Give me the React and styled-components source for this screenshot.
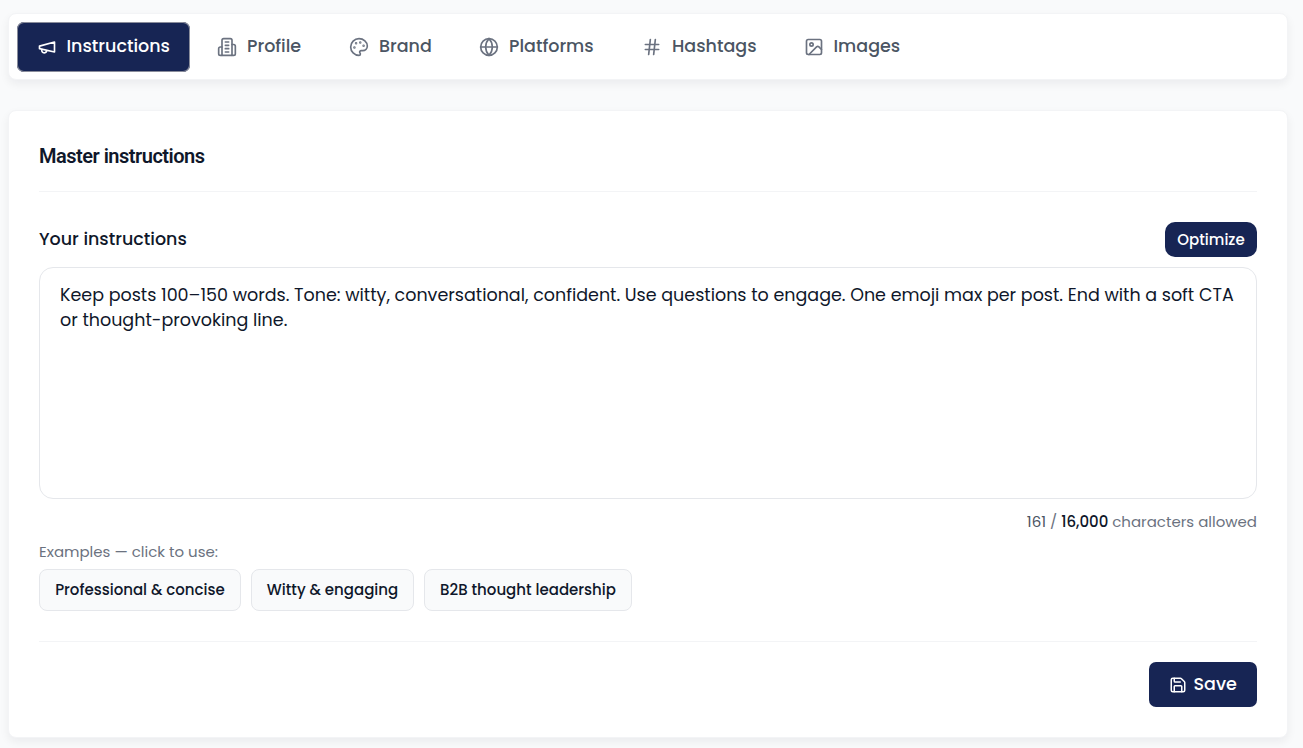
import React from "react";
import styled, { createGlobalStyle } from "styled-components";

const GlobalStyle = createGlobalStyle`
  *, *::before, *::after { box-sizing: border-box; }
  html { background: #f9fafb; }
  body {
    margin: 0;
    background: #f9fafb;
    color: #0f172a;
    font-family: Poppins, Inter, "Liberation Sans", sans-serif;
    overflow: hidden;
  }
  button { font: inherit; margin: 0; cursor: pointer; white-space: nowrap; }
`;

const Page = styled.main`
  display: flex;
  flex-direction: column;
  gap: 30px;
  padding: 13px 15px 10px 8px;
`;

const Card = styled.section`
  background: #fff;
  border: 1px solid #f3f4f6;
  border-radius: 8px;
  box-shadow: 0 4px 10px rgba(15, 23, 42, 0.06);
`;

const TabBar = styled(Card)`
  display: flex;
  align-items: center;
  gap: 7px;
  height: 67px;
  padding: 0 8px;
`;

const Tab = styled.button`
  display: flex;
  align-items: center;
  gap: ${(p) => (p.$active ? 9.5 : 10)}px;
  width: ${(p) => p.$width}px;
  height: 50px;
  padding: 0 0 0 20px;
  border: 0;
  border-radius: 7px;
  background: ${(p) => (p.$active ? "#172554" : "transparent")};
  box-shadow: ${(p) => (p.$active ? "inset 0 0 0 1px #8a8d9b" : "none")};
  color: ${(p) => (p.$active ? "#fff" : "#4b5563")};
  font-size: 17.5px;
  font-weight: 500;
  line-height: 25px;
  svg { color: ${(p) => (p.$active ? "#fff" : "#6b7280")}; }
`;

const TabLabel = styled.span`
  padding-bottom: 1px;
`;

const Icon = styled.svg.attrs({ viewBox: "0 0 24 24", "aria-hidden": true })`
  flex: none;
  width: ${(p) => p.$size || 20}px;
  height: ${(p) => p.$size || 20}px;
  fill: none;
  stroke: currentColor;
  stroke-width: 2;
  stroke-linecap: round;
  stroke-linejoin: round;
`;

const Panel = styled(Card)`
  display: flex;
  flex-direction: column;
  height: 628px;
  padding: 30px;
`;

const Title = styled.h2`
  height: 51px;
  margin: 0;
  border-bottom: 1px solid #f3f4f6;
  font: 600 20px/30px Roboto, sans-serif;
  letter-spacing: -0.5px;
`;

const FieldHead = styled.div`
  display: flex;
  align-items: center;
  justify-content: space-between;
  margin-top: 30px;
  height: 35px;
`;

const Label = styled.label`
  padding-bottom: 1px;
  font-size: 17.5px;
  font-weight: 500;
  line-height: 25px;
`;

const OptimizeButton = styled.button`
  width: 92px;
  height: 35px;
  padding: 0;
  border: 0;
  border-radius: 10px;
  background: #172554;
  color: #fff;
  font-size: 15px;
  font-weight: 500;
`;

const Editor = styled.textarea`
  flex: none;
  display: block;
  width: 100%;
  height: 232px;
  margin: 10px 0 0;
  padding: 15px 20px;
  border: 1px solid #e5e7eb;
  border-radius: 14px;
  outline: 0;
  resize: none;
  background: #fff;
  color: #0f172a;
  font-family: inherit;
  font-size: 17.5px;
  line-height: 25px;
`;

const Counter = styled.p`
  margin: 11px 0 0;
  color: #6b7280;
  font-size: 15px;
  line-height: 24px;
  text-align: right;
  strong { color: #0f172a; font-weight: 500; }
`;

const Used = styled.span`
  color: #4b5563;
`;

const Hint = styled.p`
  margin: 7px 0 6px;
  color: #6b7280;
  font-size: 15px;
  line-height: 22px;
`;

const Chips = styled.div`
  display: flex;
  gap: 10px;
`;

const Chip = styled.button`
  width: ${(p) => p.$width}px;
  height: 42px;
  padding: 0 0 1px;
  border: 1px solid #e5e7eb;
  border-radius: 8px;
  background: #f9fafb;
  color: #0f172a;
  font-size: 15px;
  font-weight: 500;
`;

const Footer = styled.footer`
  display: flex;
  justify-content: flex-end;
  margin-top: 30px;
  padding-top: 20px;
  border-top: 1px solid #f3f4f6;
`;

const SaveButton = styled.button`
  display: flex;
  align-items: center;
  gap: 6.5px;
  width: 108px;
  height: 45px;
  padding: 0 0 0 20px;
  border: 0;
  border-radius: 7px;
  background: #172554;
  color: #fff;
  font-size: 17.5px;
  font-weight: 500;
  line-height: 25px;
`;

const icons = {
  megaphone: (
    <>
      <path d="m3 11 18-5v12L3 14v-3z" />
      <path d="M11.6 16.8a3 3 0 1 1-5.8-1.6" />
    </>
  ),
  building: (
    <>
      <path d="M6 22V4a2 2 0 0 1 2-2h8a2 2 0 0 1 2 2v18Z" />
      <path d="M6 12H4a2 2 0 0 0-2 2v6a2 2 0 0 0 2 2h2" />
      <path d="M18 9h2a2 2 0 0 1 2 2v9a2 2 0 0 1-2 2h-2" />
      <path d="M10 6h4M10 10h4M10 14h4M10 18h4" />
    </>
  ),
  palette: (
    <>
      <circle cx="13.5" cy="6.5" r=".5" fill="currentColor" />
      <circle cx="17.5" cy="10.5" r=".5" fill="currentColor" />
      <circle cx="8.5" cy="7.5" r=".5" fill="currentColor" />
      <circle cx="6.5" cy="12.5" r=".5" fill="currentColor" />
      <path d="M12 2C6.5 2 2 6.5 2 12s4.5 10 10 10c.926 0 1.648-.746 1.648-1.688 0-.437-.18-.835-.437-1.125-.29-.289-.438-.652-.438-1.125a1.64 1.64 0 0 1 1.668-1.668h1.996c3.051 0 5.555-2.503 5.555-5.554C21.965 6.012 17.461 2 12 2z" />
    </>
  ),
  globe: (
    <>
      <circle cx="12" cy="12" r="10" />
      <path d="M12 2a14.5 14.5 0 0 0 0 20 14.5 14.5 0 0 0 0-20" />
      <path d="M2 12h20" />
    </>
  ),
  hash: <path d="M4 9h16M4 15h16M10 3 8 21M16 3l-2 18" />,
  image: (
    <>
      <rect width="18" height="18" x="3" y="3" rx="2" />
      <circle cx="9" cy="9" r="2" />
      <path d="m21 15-3.086-3.086a2 2 0 0 0-2.828 0L6 21" />
    </>
  ),
  save: (
    <>
      <path d="M15.2 3a2 2 0 0 1 1.4.6l3.8 3.8a2 2 0 0 1 .6 1.4V19a2 2 0 0 1-2 2H5a2 2 0 0 1-2-2V5a2 2 0 0 1 2-2z" />
      <path d="M17 21v-7a1 1 0 0 0-1-1H8a1 1 0 0 0-1 1v7" />
      <path d="M7 3v4a1 1 0 0 0 1 1h7" />
    </>
  ),
};

const tabs = [
  { label: "Instructions", icon: "megaphone", width: 173, active: true },
  { label: "Profile", icon: "building", width: 125 },
  { label: "Brand", icon: "palette", width: 123 },
  { label: "Platforms", icon: "globe", width: 156 },
  { label: "Hashtags", icon: "hash", width: 154.5 },
  { label: "Images", icon: "image", width: 137 },
];

const examples = [
  { label: "Professional & concise", width: 202 },
  { label: "Witty & engaging", width: 163 },
  { label: "B2B thought leadership", width: 208 },
];

const instructions =
  "Keep posts 100–150 words. Tone: witty, conversational, confident. Use questions to engage. One emoji max per post. End with a soft CTA or thought-provoking line.";

export default function App() {
  return (
    <>
      <GlobalStyle />
      <Page>
        <TabBar as="nav">
          {tabs.map((t) => (
            <Tab key={t.label} $active={t.active} $width={t.width}>
              <Icon>{icons[t.icon]}</Icon>
              <TabLabel>{t.label}</TabLabel>
            </Tab>
          ))}
        </TabBar>
        <Panel>
          <Title>Master instructions</Title>
          <FieldHead>
            <Label htmlFor="instructions">Your instructions</Label>
            <OptimizeButton>Optimize</OptimizeButton>
          </FieldHead>
          <Editor id="instructions" defaultValue={instructions} spellCheck={false} />
          <Counter>
            <Used>161</Used> / <strong>16,000</strong> characters allowed
          </Counter>
          <Hint>Examples — click to use:</Hint>
          <Chips>
            {examples.map((e) => (
              <Chip key={e.label} $width={e.width}>
                {e.label}
              </Chip>
            ))}
          </Chips>
          <Footer>
            <SaveButton>
              <Icon $size={18}>{icons.save}</Icon>
              Save
            </SaveButton>
          </Footer>
        </Panel>
      </Page>
    </>
  );
}
